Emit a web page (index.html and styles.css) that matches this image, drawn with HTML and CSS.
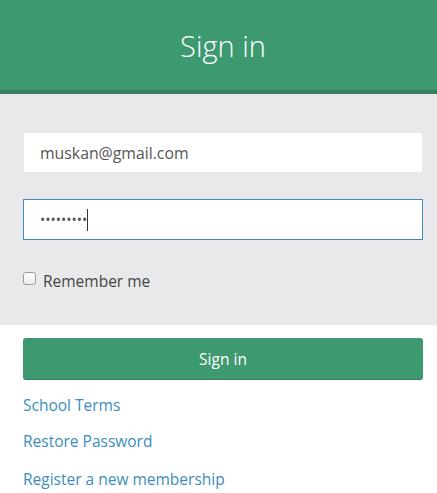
FILE: index.html
```html
<!DOCTYPE html>
<html>
<head>
<meta charset="utf-8">
<link rel="stylesheet" href="styles.css">
</head>
<body>
<div class="page">
  <header class="head">
    <h1 class="title">Sign in</h1>
  </header>
  <section class="panel">
    <div class="field email">muskan@gmail.com</div>
    <div class="field pass"><span class="dots">•••••••••</span><span class="caret"></span></div>
    <label class="remember"><span class="box"></span>Remember me</label>
  </section>
  <section class="foot">
    <div class="btn">Sign in</div>
    <a class="link">School Terms</a>
    <a class="link">Restore Password</a>
    <a class="link">Register a new membership</a>
  </section>
</div>
</body>
</html>
```

FILE: styles.css
```css
* { box-sizing: border-box; }
html, body { margin: 0; padding: 0; background: #fff; }
body { font-family: "Open Sans", "Noto Sans", sans-serif; color: #444; }
.page { width: 437px; }
.head {
  background: #3d9970;
  height: 94px;
  border-bottom: 4px solid #37805e;
  display: flex;
  align-items: center;
  justify-content: center;
  padding-left: 9px;
}
.title {
  margin: 0;
  font-weight: 300;
  font-size: 29px;
  color: #fff;
}
.panel {
  background: #e9e9eb;
  padding: 38px 14px 0 23px;
  height: 231px;
  display: flex;
  flex-direction: column;
}
.field {
  height: 41px;
  background: #fff;
  border: 1px solid #e9e9eb;
  display: flex;
  align-items: center;
  padding-left: 16px;
  font-size: 15.8px;
  color: #555;
}
.pass {
  margin-top: 26px;
  border-color: #3c8dbc;
}
.dots { font-size: 14px; letter-spacing: 0; color: #555; }
.caret { width: 1px; height: 22px; background: #333; margin-left: 0; }
.remember {
  margin-top: 30px;
  display: flex;
  align-items: center;
  font-size: 15.5px;
  color: #444;
}
.box {
  width: 13px; height: 13px;
  border: 1px solid #9a9a9a;
  border-radius: 3px;
  background: linear-gradient(#fff, #ececec);
  margin-right: 7px;
  margin-top: -6px;
}
.foot {
  padding: 13px 14px 0 23px;
  display: flex;
  flex-direction: column;
}
.btn {
  height: 42px;
  background: #3d9970;
  border-bottom: 1px solid #367f5e;
  border-radius: 3px;
  color: #fff;
  font-size: 15.5px;
  display: flex;
  align-items: center;
  justify-content: center;
}
.link {
  color: #3c8dbc;
  font-size: 15.5px;
  text-decoration: none;
  margin-top: 13px;
  line-height: 24px;
}
.link + .link { margin-top: 12px; }
.link:last-child { margin-top: 14px; }
```
